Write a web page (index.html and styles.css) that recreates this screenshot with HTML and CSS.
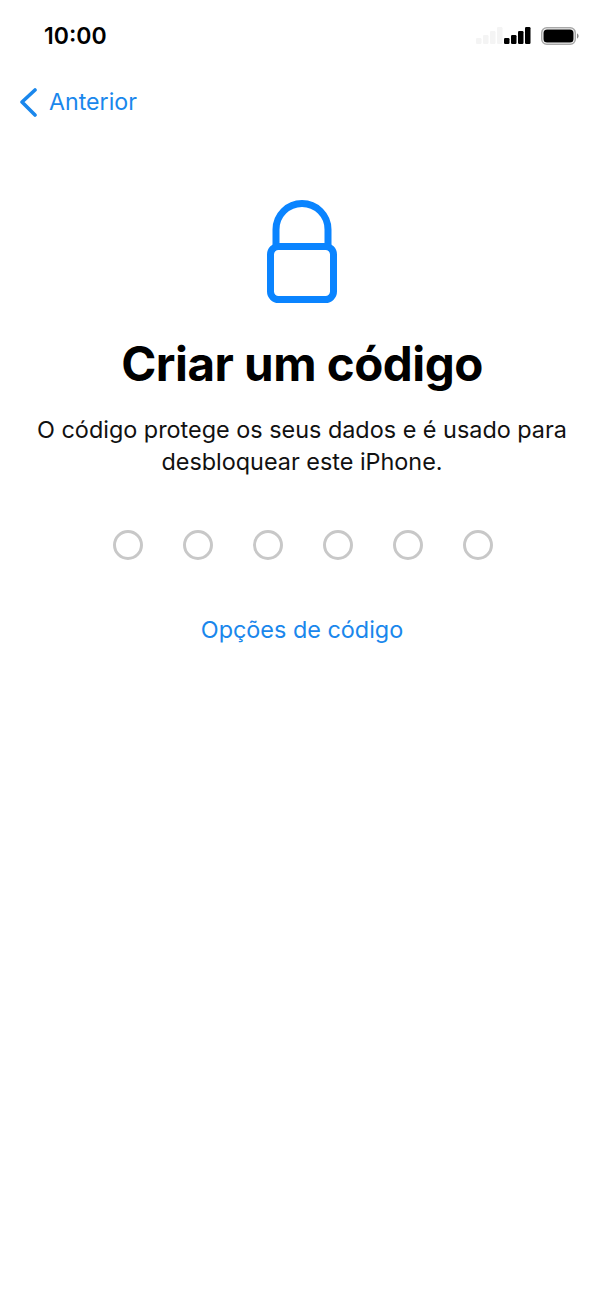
FILE: index.html
```html
<!DOCTYPE html>
<html lang="pt">
<head>
    <meta charset="UTF-8">
    <meta name="viewport" content="width=device-width, initial-scale=1.0">
    <title>Criar um código</title>
    <link rel="stylesheet" href="styles.css">
</head>
<body>
<div class="screen">
    <div class="status-bar">
        <span class="clock">10:00</span>
        <div class="status-icons">
            <svg class="signal" width="56" height="18" viewBox="0 0 56 18">
                <g fill="#f4f4f4">
                    <rect x="0" y="11" width="5.500" height="6" rx="1.200"/>
                    <rect x="7" y="8" width="5.500" height="9" rx="1.200"/>
                    <rect x="14" y="4" width="5.500" height="13" rx="1.200"/>
                    <rect x="21" y="0" width="5.500" height="17" rx="1.200"/>
                </g>
                <g fill="#000">
                    <rect x="28" y="11" width="5.500" height="6" rx="1.200"/>
                    <rect x="35" y="8" width="5.500" height="9" rx="1.200"/>
                    <rect x="42" y="4" width="5.500" height="13" rx="1.200"/>
                    <rect x="49" y="0" width="5.500" height="17" rx="1.200"/>
                </g>
            </svg>
            <svg class="battery" width="38" height="18" viewBox="0 0 38 18">
                <rect x="0.750" y="0.750" width="33.500" height="16.500" rx="5" fill="none" stroke="#a8a8a8" stroke-width="1.500"/>
                <rect x="2.500" y="2.500" width="30" height="13" rx="3.500" fill="#000"/>
                <path d="M36 6.500c1 .3 1.600 1.300 1.600 2.500s-.6 2.200-1.600 2.500z" fill="#8a8a8a"/>
            </svg>
        </div>
    </div>

    <div class="nav-bar">
        <a class="back">
            <svg width="20" height="30" viewBox="0 0 20 30">
                <path d="M16 3 3 15 16 28" fill="none" stroke="#1a87ec" stroke-width="3.600" stroke-linecap="round" stroke-linejoin="round"/>
            </svg>
            <span>Anterior</span>
        </a>
    </div>

    <div class="content">
        <svg class="lock" width="72" height="107" viewBox="0 0 72 107">
            <path d="M10 49V32.500a26 26 0 0 1 52 0V49" fill="none" stroke="#0a84ff" stroke-width="7"/>
            <rect x="4.500" y="49.500" width="63" height="53" rx="8" fill="none" stroke="#0a84ff" stroke-width="7"/>
        </svg>
        <h1>Criar um código</h1>
        <p class="subtitle">O código protege os seus dados e é usado para desbloquear este iPhone.</p>
        <div class="dots">
            <span class="dot"></span>
            <span class="dot"></span>
            <span class="dot"></span>
            <span class="dot"></span>
            <span class="dot"></span>
            <span class="dot"></span>
        </div>
        <a class="options">Opções de código</a>
    </div>
</div>
</body>
</html>
```

FILE: styles.css
```css
* {
    box-sizing: border-box;
}
body {
    margin: 0;
    padding: 0;
    background-color: #fff;
    font-family: Inter, "Liberation Sans", Arial, sans-serif;
    color: #000;
}
.screen {
    width: 604px;
    height: 1307px;
    overflow: hidden;
}
.status-bar {
    height: 72px;
    padding: 0 25px 0 44px;
    display: flex;
    justify-content: space-between;
    align-items: center;
}
.clock {
    font-size: 23px;
    font-weight: 600;
}
.status-icons {
    display: flex;
    align-items: center;
    gap: 9px;
}
.nav-bar {
    height: 60px;
    padding-left: 19px;
    display: flex;
    align-items: center;
}
.back {
    display: flex;
    align-items: center;
    gap: 10px;
    color: #1a87ec;
    font-size: 23.200px;
}
.content {
    display: flex;
    flex-direction: column;
    align-items: center;
    padding-top: 65px;
}
h1 {
    margin: 33px 0 0;
    font-size: 47.500px;
    line-height: 54px;
    font-weight: 700;
    letter-spacing: -0.500px;
    white-space: nowrap;
}
.subtitle {
    margin: 23px 0 0;
    width: 570px;
    text-align: center;
    font-size: 23.400px;
    line-height: 32px;
    color: #111;
}
.dots {
    margin-top: 52px;
    padding-left: 1px;
    display: flex;
    gap: 40px;
}
.dot {
    width: 30px;
    height: 30px;
    border: 3px solid #c8c8c8;
    border-radius: 50%;
}
.options {
    margin-top: 53px;
    color: #1a87ec;
    font-size: 23.400px;
    line-height: 34px;
}
```
